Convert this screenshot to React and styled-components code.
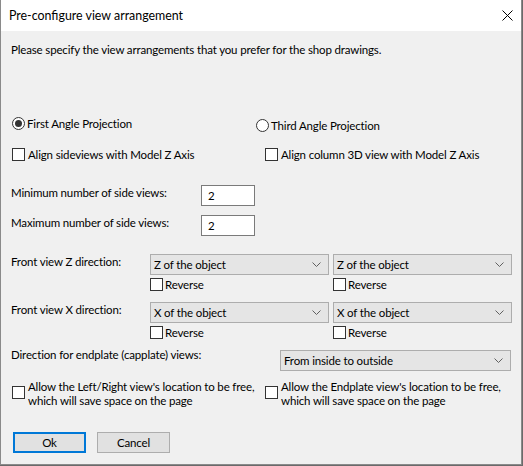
import React from 'react';
import styled, { createGlobalStyle } from 'styled-components';

const GlobalStyle = createGlobalStyle`
  html, body {
    margin: 0;
    padding: 0;
    background: #6a6a6a;
  }
  body {
    font-family: "Segoe UI", Lato, "Liberation Sans", sans-serif;
    font-size: 11.5px;
    letter-spacing: -0.15px;
    color: #000;
  }
`;

const Window = styled.div`
  width: 520px;
  height: 464px;
  background: #f0f0f0;
  border: 1px solid #8a8a8a;
  border-top: 0;
  display: flex;
  flex-direction: column;
`;

const TitleBar = styled.div`
  height: 31px;
  background: #fff;
  display: flex;
  align-items: center;
  justify-content: space-between;
  padding: 0 7px 0 8px;
`;

const Title = styled.span`
  font-size: 12.4px;
  letter-spacing: 0;
`;

const CloseButton = styled.div`
  width: 12px;
  height: 12px;
  display: flex;
  align-items: center;
  justify-content: center;
  margin-right: 1px;
`;

const Body = styled.div`
  padding: 0 9px 0 10px;
  display: flex;
  flex-direction: column;
`;

const Text = styled.div`
  line-height: 15px;
  margin-top: ${(p) => p.$top || 0}px;
  white-space: nowrap;
`;

const TwoCol = styled.div`
  display: grid;
  grid-template-columns: ${(p) => p.$first}px 1fr;
  align-items: start;
  margin-top: ${(p) => p.$top}px;
`;

const Option = styled.label`
  display: flex;
  align-items: ${(p) => (p.$multi ? 'flex-start' : 'center')};
  gap: ${(p) => p.$gap ?? 3}px;
  line-height: ${(p) => (p.$multi ? 14 : 15)}px;
  margin-left: ${(p) => p.$left || 0}px;
  margin-top: ${(p) => p.$shift || 0}px;
  white-space: nowrap;
`;

const Radio = styled.span`
  width: 11px;
  height: 11px;
  border: 1px solid #333;
  border-radius: 50%;
  background: #fff;
  display: flex;
  align-items: center;
  justify-content: center;
  flex: none;

  &::after {
    content: '';
    width: 7px;
    height: 7px;
    border-radius: 50%;
    background: ${(p) => (p.$on ? '#333' : 'transparent')};
  }
`;

const Box = styled.span`
  width: 11px;
  height: 11px;
  border: 1px solid #333;
  background: #fff;
  flex: none;
  margin-top: ${(p) => p.$top || 0}px;
`;

const FieldRow = styled.div`
  display: grid;
  grid-template-columns: ${(p) => p.$label}px auto;
  align-items: start;
  margin-top: ${(p) => p.$top}px;
`;

const Input = styled.div`
  width: 46px;
  height: 19px;
  border: 1px solid #7a7a7a;
  background: #fff;
  padding-left: 6px;
  line-height: 19px;
`;

const ComboGrid = styled.div`
  display: grid;
  grid-template-columns: 139px 179px 4px 179px;
  margin-top: ${(p) => p.$top}px;

  & > :nth-child(3) {
    grid-column: 4;
  }
`;

const ComboCell = styled.div`
  display: flex;
  flex-direction: column;
  gap: 3px;
`;

const Combo = styled.div`
  width: ${(p) => p.$width}px;
  height: 21px;
  box-sizing: border-box;
  border: 1px solid #adadad;
  background: #e5e5e5;
  display: flex;
  align-items: center;
  justify-content: space-between;
  padding: 0 7px 0 3px;
  line-height: 19px;
`;

const Reverse = styled(Option)`
  gap: 2px;
  line-height: 13px;
`;

const Buttons = styled.div`
  display: flex;
  gap: 11px;
  margin: 24px 0 0 2px;
`;

const Button = styled.div`
  width: 73px;
  height: 21px;
  box-sizing: border-box;
  border: ${(p) => (p.$primary ? '2px solid #0078d7' : '1px solid #adadad')};
  background: #e1e1e1;
  display: flex;
  align-items: center;
  justify-content: center;
`;

const Chevron = () => (
  <svg width="9" height="5" viewBox="0 0 9 5">
    <path d="M0.5 0.5 L4.5 4.5 L8.5 0.5" fill="none" stroke="#606060" strokeWidth="1" />
  </svg>
);

const Select = ({ value, width }) => (
  <Combo $width={width}>
    <span>{value}</span>
    <Chevron />
  </Combo>
);

const DirectionRow = ({ label, value, top }) => (
  <ComboGrid $top={top}>
    <Text>{label}</Text>
    <ComboCell>
      <Select value={value} width={179} />
      <Reverse><Box />Reverse</Reverse>
    </ComboCell>
    <ComboCell>
      <Select value={value} width={179} />
      <Reverse><Box />Reverse</Reverse>
    </ComboCell>
  </ComboGrid>
);

export default function App() {
  return (
    <>
      <GlobalStyle />
      <Window>
        <TitleBar>
          <Title>Pre-configure view arrangement</Title>
          <CloseButton>
            <svg width="11" height="11" viewBox="0 0 11 11">
              <path d="M0.5 0.5 L10.5 10.5 M10.5 0.5 L0.5 10.5" stroke="#000" strokeWidth="1" />
            </svg>
          </CloseButton>
        </TitleBar>
        <Body>
          <Text $top={11}>Please specify the view arrangements that you prefer for the shop drawings.</Text>

          <TwoCol $first={245} $top={59}>
            <Option $left={1} $gap={2}><Radio $on />First Angle Projection</Option>
            <Option $gap={2} $shift={2}><Radio />Third Angle Projection</Option>
          </TwoCol>

          <TwoCol $first={254} $top={14}>
            <Option $left={1}><Box />Align sideviews with Model Z Axis</Option>
            <Option><Box />Align column 3D view with Model Z Axis</Option>
          </TwoCol>

          <FieldRow $label={190} $top={23}>
            <Text>Minimum number of side views:</Text>
            <Input>2</Input>
          </FieldRow>
          <FieldRow $label={190} $top={9}>
            <Text>Maximum number of side views:</Text>
            <Input>2</Input>
          </FieldRow>

          <DirectionRow label="Front view Z direction:" value="Z of the object" top={18} />
          <DirectionRow label="Front view X direction:" value="X of the object" top={11} />

          <FieldRow $label={269} $top={11}>
            <Text $top={-3}>Direction for endplate (capplate) views:</Text>
            <Select value="From inside to outside" width={231} />
          </FieldRow>

          <TwoCol $first={254} $top={9}>
            <Option $multi $left={1}>
              <Box $top={6} />
              <span>Allow the Left/Right view's location to be free,<br />which will save space on the page</span>
            </Option>
            <Option $multi>
              <Box $top={6} />
              <span>Allow the Endplate view's location to be free,<br />which will save space on the page</span>
            </Option>
          </TwoCol>

          <Buttons>
            <Button $primary>Ok</Button>
            <Button>Cancel</Button>
          </Buttons>
        </Body>
      </Window>
    </>
  );
}
